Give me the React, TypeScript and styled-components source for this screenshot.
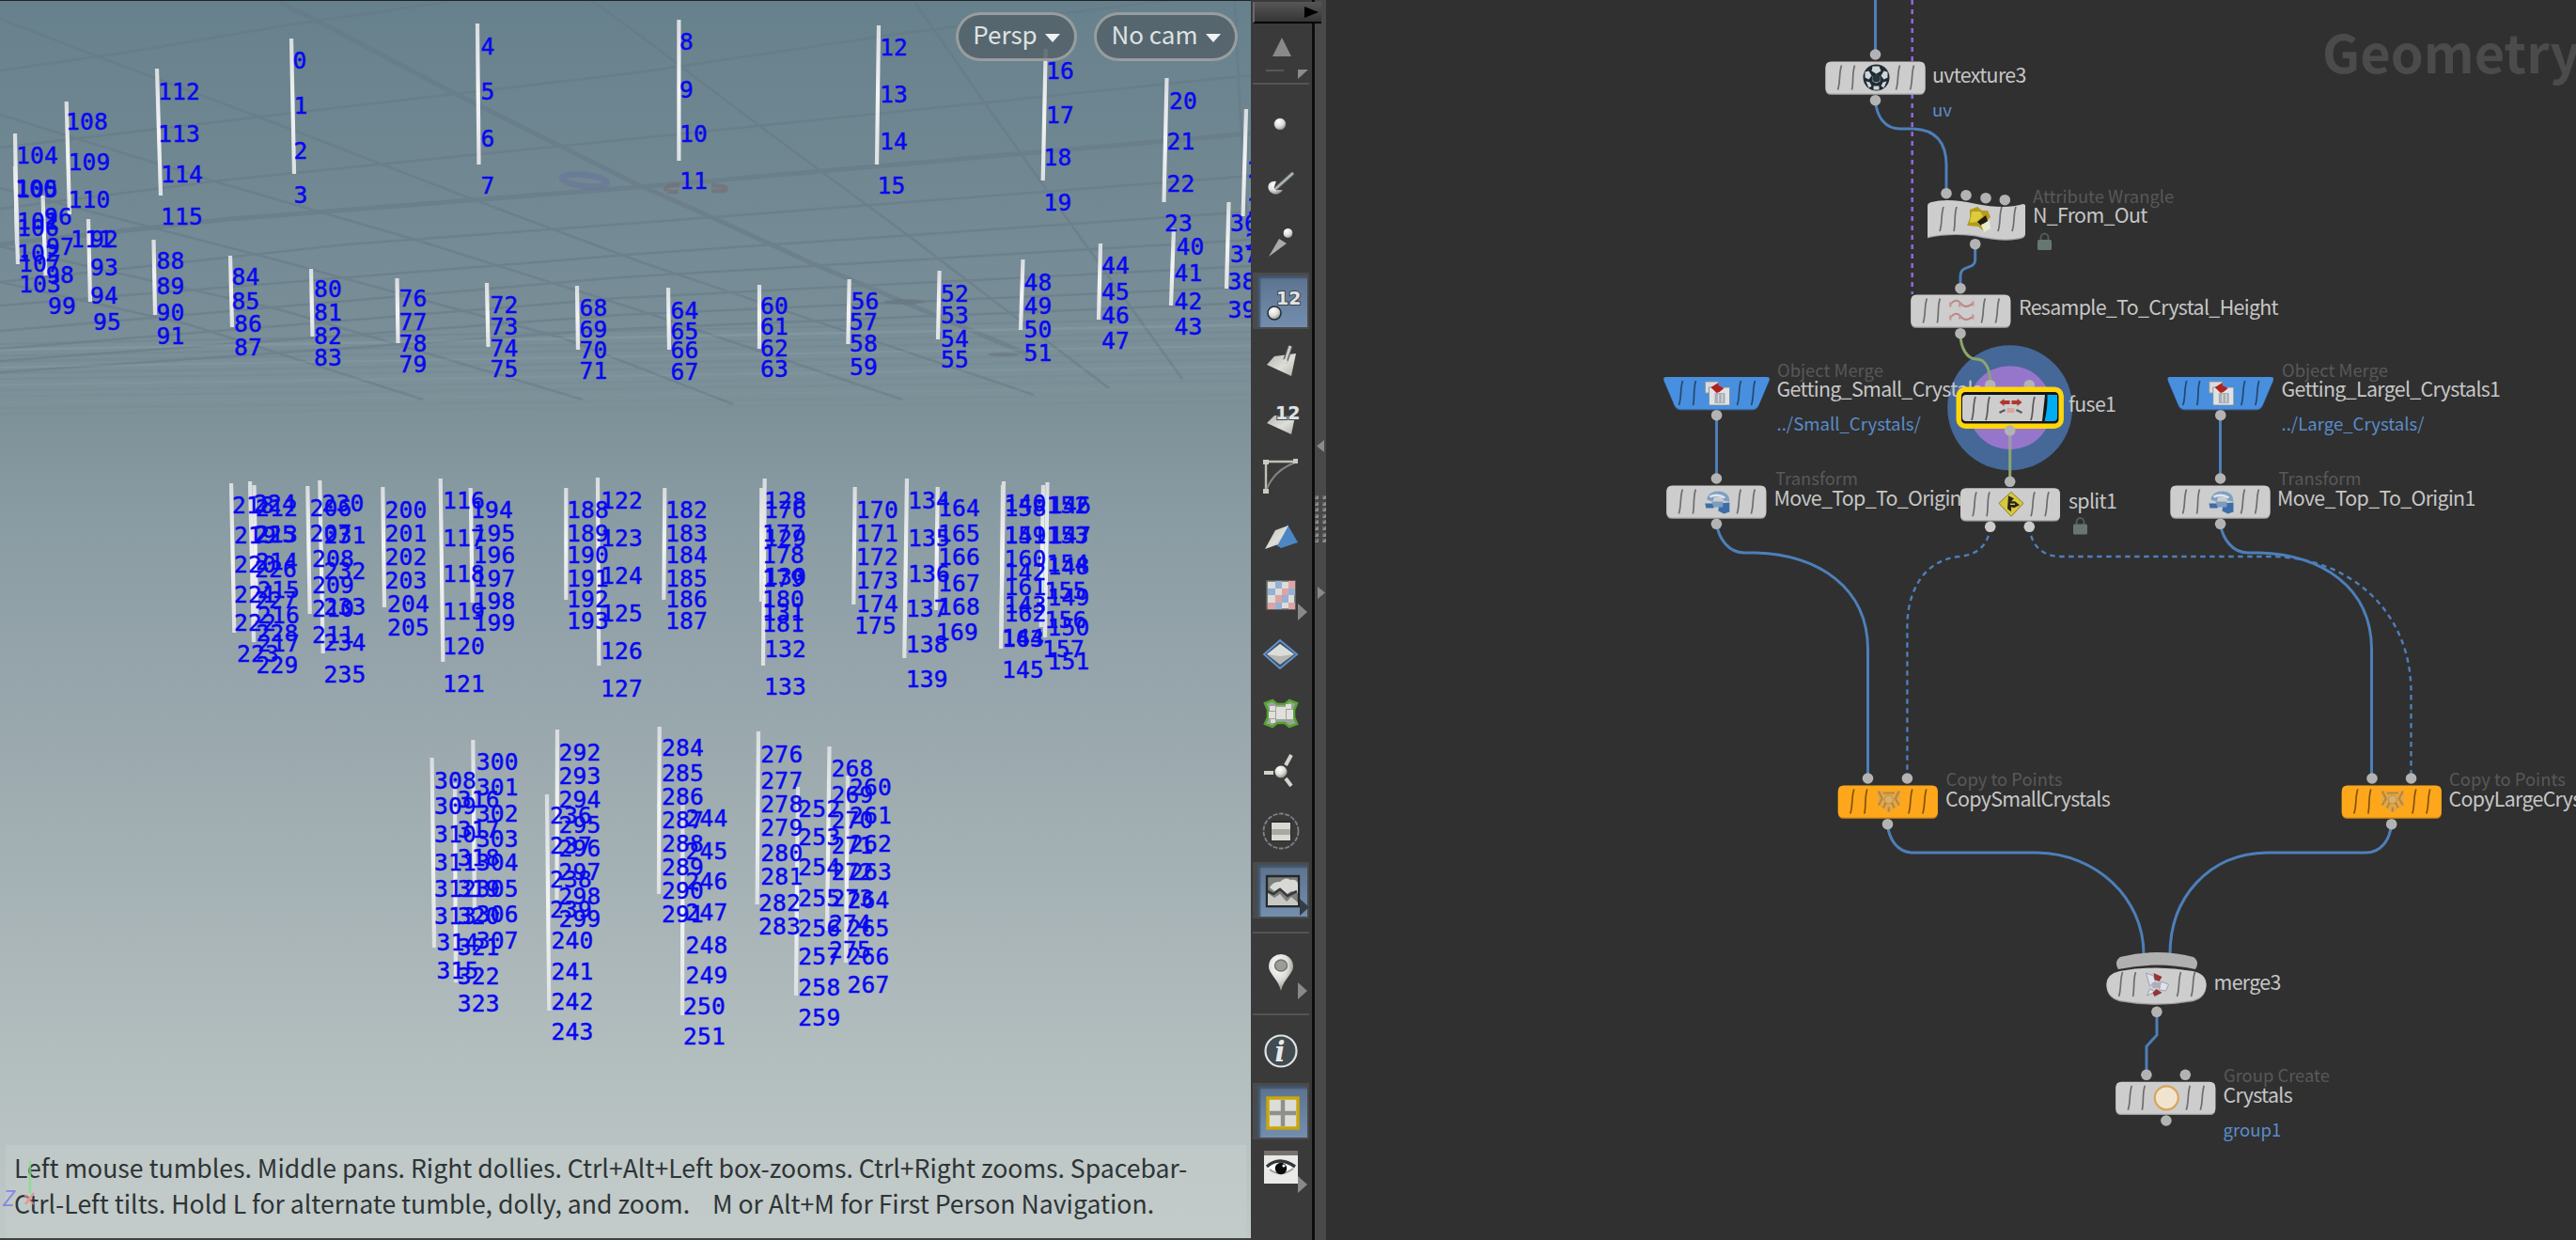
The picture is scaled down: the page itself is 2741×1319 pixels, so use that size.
import React from "react";
import styled, { createGlobalStyle } from "styled-components";

const GlobalStyle = createGlobalStyle`
  * { box-sizing: border-box; }
  html, body { margin: 0; padding: 0; background: #303030; overflow: hidden; }
`;

const uiFont = `"Noto Sans CJK SC", "Noto Sans CJK JP", "Noto Sans", sans-serif`;

/* ---------- layout ---------- */

const Screen = styled.div`
  display: flex;
  width: 2741px;
  height: 1319px;
  overflow: hidden;
  font-family: ${uiFont};
`;

const Viewport = styled.section`
  position: relative;
  display: flex;
  flex-direction: column;
  justify-content: space-between;
  flex: 0 0 1331px;
  overflow: hidden;
  border-top: 1px solid #1f2427;
  border-bottom: 2px solid #40403f;
  background: linear-gradient(
    180deg,
    #67818c 0%,
    #758b95 20%,
    #7d9199 33%,
    #8a9ca3 42%,
    #97a6ac 56%,
    #a4b1b4 70%,
    #b2bdbe 85%,
    #bfc8c8 100%
  );
`;

const SceneLayer = styled.svg`
  position: absolute;
  left: 0;
  top: -1px;
  width: 1331px;
  height: 1319px;
`;

const PointLabel = styled.span.attrs<{ $x: number; $y: number }>((p) => ({
  style: { left: p.$x, top: p.$y - 12.5 },
}))<{ $x: number; $y: number }>`
  position: absolute;
  font: 24.5px/24px "DejaVu Sans Mono", monospace;
  letter-spacing: 0.3px;
  color: #0808f0;
  -webkit-text-stroke: 0.5px #0808f0;
  white-space: nowrap;
`;

const CameraBar = styled.div`
  position: relative;
  display: flex;
  justify-content: flex-end;
  gap: 18px;
  padding: 12px 14px 0 0;
`;

const CameraButton = styled.button<{ $w: number }>`
  display: flex;
  align-items: center;
  justify-content: center;
  gap: 8px;
  width: ${(p) => p.$w}px;
  height: 52px;
  padding: 0 0 6px;
  border: 3px solid rgba(160, 163, 163, 0.9);
  border-radius: 26px;
  background: rgba(84, 98, 106, 0.85);
  color: #dfe2e3;
  font: 26px/44px ${uiFont};
  white-space: nowrap;
`;

const Caret = styled.i`
  width: 0;
  height: 0;
  margin-top: 8px;
  border: 8px solid transparent;
  border-top: 9px solid #f0f2f2;
  border-bottom: 0;
`;

const HelpPanel = styled.div`
  position: relative;
  height: 99px;
  margin: 0 5px 0 6px;
  padding: 5px 0 0 9px;
  background: rgba(196, 205, 203, 0.55);
  color: #2e3437;
  font: 26.6px/38px ${uiFont};
  white-space: pre;
`;

const HelpLine = styled.div``;

const Toolbar = styled.nav`
  display: flex;
  flex-direction: column;
  align-items: center;
  flex: 0 0 65px;
  min-width: 0;
  width: 65px;
  padding: 2px 3px 0 2px;
  background: #3a3a3a;
`;

const ToolbarHandle = styled.div`
  display: flex;
  justify-content: flex-end;
  align-items: center;
  align-self: flex-start;
  width: 73px;
  height: 23px;
  flex: none;
  padding-right: 2px;
  border-left: 2px solid #6a6a6a;
  border-bottom: 2px solid #050505;
  background: linear-gradient(180deg, #565656, #353535);
  z-index: 1;
`;

const ToolCell = styled.div<{ $h: number }>`
  display: flex;
  align-items: center;
  justify-content: center;
  flex: 0 0 ${(p) => p.$h}px;
  width: 60px;
`;

const ToolFace = styled.div<{ $active?: boolean }>`
  display: flex;
  align-items: center;
  justify-content: center;
  width: 60px;
  height: 60px;
  ${(p) =>
    p.$active &&
    `border: solid #4a4a4b; border-width: 3px 2px 2px 5px; background: linear-gradient(180deg, #5c738f, #738eae);
     box-shadow: inset 3px 3px 2px #40546b;`}
  svg { flex: none; overflow: visible; }
`;

const ToolRule = styled.hr`
  width: 60px;
  height: 2px;
  flex: none;
  margin: 0;
  border: 0;
  background: #545454;
`;

const Splitter = styled.div`
  display: flex;
  flex-direction: column;
  align-items: center;
  flex: 0 0 15px;
  padding-top: 468px;
  border-left: 3px solid #0c0c0c;
  background: #494949;
  svg { flex: none; }
`;

const Grip = styled.div`
  display: grid;
  grid-template-columns: 4px 4px;
  grid-auto-rows: 4px;
  gap: 2.6px 4px;
  margin: 46px 0 47px;
`;

const GripDot = styled.i`
  background: linear-gradient(135deg, #666 50%, #8e8e8e 50%);
  border-radius: 1px;
`;

/* ---------- network editor ---------- */

const Network = styled.main`
  position: relative;
  flex: 1 1 auto;
  overflow: hidden;
  background: #303030;
`;

const Canvas = styled.div`
  position: absolute;
  left: -1411px;
  top: 0;
  width: 2741px;
  height: 1319px;
`;

const WireLayer = styled.svg`
  position: absolute;
  inset: 0;
  width: 2741px;
  height: 1319px;
`;

const ContextTitle = styled.div`
  position: absolute;
  left: 2471px;
  top: 12px;
  color: #4b4b4b;
  font: 700 56px/84px ${uiFont};
`;

type Tone = "name" | "type" | "info";
const tones = {
  name: { size: 21.4, color: "#c6c6c6", spacing: -0.68 },
  type: { size: 18.4, color: "#585858", spacing: 0 },
  info: { size: 18.6, color: "#5a8cc8", spacing: 0 },
};

const NodeText = styled.span<{ $x: number; $y: number; $tone: Tone }>`
  position: absolute;
  left: ${(p) => p.$x}px;
  top: ${(p) => p.$y - 17}px;
  color: ${(p) => tones[p.$tone].color};
  font: ${(p) => tones[p.$tone].size}px/30px ${uiFont};
  letter-spacing: ${(p) => tones[p.$tone].spacing}px;
  white-space: nowrap;
`;

/* ---------- point data ---------- */

interface Strand {
  first: number;
  line: [number, number, number, number];
  xs: number[];
  ys: number[];
}

const s = (first: number, line: [number, number, number, number], xs: number[], ys: number[]): Strand => ({ first, line, xs, ys });

const strands: Strand[] = [
  s(0, [310, 41, 313, 185], [311.5, 312.5], [64, 112, 160, 207]),
  s(4, [508, 25, 509.5, 175], [511.5], [49, 97, 147, 197]),
  s(8, [722.4, 21, 722.4, 171], [723], [44, 95, 142, 192]),
  s(12, [935, 27, 933, 175], [936, 936, 936, 933.5], [50, 100, 150, 197]),
  s(16, [1112.7, 52, 1109.7, 192], [1113, 1113, 1110.5], [75, 122, 167, 215]),
  s(20, [1241.5, 83, 1238.5, 215], [1244, 1241.5, 1241.5, 1239], [107, 150, 195, 237]),
  s(24, [1326, 116, 1322.6, 230], [1331, 1327.5, 1327.5, 1325], [141, 180, 219, 257]),
  s(36, [1307.5, 215, 1305, 307], [1309, 1309, 1306.5], [237, 270, 299, 329]),
  s(40, [1249, 243, 1246, 325], [1251.5, 1249.5], [262, 290, 320, 347]),
  s(44, [1171, 259, 1169, 340], [1172], [282, 310, 335, 362]),
  s(48, [1088.5, 276, 1086, 351], [1089.5], [300, 325, 350, 375]),
  s(52, [999.6, 288, 998, 361], [1001], [312, 335, 360, 382]),
  s(56, [903.7, 297, 902.4, 366], [905.5, 904], [320, 342, 365, 390]),
  s(60, [808, 303, 808, 371], [809], [325, 347, 370, 392]),
  s(64, [711, 306, 712, 372], [713.5], [330, 352, 372, 395]),
  s(68, [614, 304, 615, 372], [616.5], [327, 350, 372, 394]),
  s(72, [518, 301, 519.5, 369], [521.5], [324, 347, 370, 392]),
  s(76, [422.5, 296, 423.5, 365], [424.5], [317, 342, 365, 387]),
  s(80, [331, 286, 332.5, 358], [334], [307, 332, 357, 380]),
  s(84, [245, 272, 247, 348], [246.5, 246.5, 249], [294, 320, 344, 369]),
  s(88, [163.5, 255, 165, 335], [166.5], [277, 304, 332, 357]),
  s(92, [94, 233, 96, 321], [96, 96, 96, 99], [254, 284, 314, 342]),
  s(96, [45.5, 208, 48.5, 293], [47, 49, 49, 51], [230, 262, 292, 325]),
  s(100, [16, 177, 19, 281], [16, 18, 18, 20], [200, 235, 269, 302]),
  s(104, [16, 142, 18, 260], [17, 17, 18, 20], [165, 201, 242, 280]),
  s(108, [70.7, 108, 74, 228], [70, 72.5, 72.5, 75], [129, 172, 212, 254]),
  s(112, [167, 73, 171, 208], [168, 168, 171], [97, 142, 185, 230]),
  s(116, [468.7, 509, 471.3, 704], [471], [532, 572, 610, 650, 687, 727]),
  s(122, [636, 508, 637.3, 708], [639], [532, 572, 612, 652, 692, 732]),
  s(128, [813.7, 509, 812, 708], [813, 813, 813, 811, 813], [532, 572, 613, 651, 690, 730]),
  s(134, [965, 509, 962.3, 700], [966, 966, 966, 963.7], [532, 572, 610, 647, 685, 722]),
  s(140, [1068, 512, 1065, 690], [1068.5, 1068.5, 1068.5, 1068.5, 1066], [535, 569, 608, 643, 678, 712]),
  s(146, [1114.5, 513, 1112, 678], [1116, 1116, 1114.5], [537, 569, 602, 635, 667, 703]),
  s(152, [1110, 516, 1107.7, 667], [1113.5, 1113.5, 1113.5, 1111.5, 1111.5, 1109], [537, 569, 599, 628, 659, 690]),
  s(158, [1067, 516, 1065.5, 670], [1068.5, 1068.5, 1068.5, 1068.5, 1068.5, 1066], [540, 569, 594, 624, 652, 679]),
  s(164, [997.7, 518, 996, 649], [998, 998, 998, 998, 998, 996], [540, 567, 592, 620, 645, 672]),
  s(170, [909.7, 518, 908.3, 643], [910.8, 910.8, 910.8, 910.8, 910.8, 909], [542, 567, 592, 617, 642, 665]),
  s(176, [810.3, 519, 810, 640], [813, 811], [542, 567, 590, 615, 637, 663]),
  s(182, [707.3, 519, 706.3, 638], [708], [542, 567, 590, 615, 637, 660]),
  s(188, [602.3, 519, 602.3, 638], [603], [542, 567, 590, 615, 637, 660]),
  s(194, [500.7, 519, 502.7, 641], [501, 503.5], [542, 567, 590, 615, 639, 662]),
  s(200, [407.3, 518, 409, 646], [409.5, 409.5, 409.5, 409.5, 412], [542, 567, 592, 617, 642, 667]),
  s(206, [327.3, 517, 329.7, 653], [329.5, 329.5, 332], [540, 567, 594, 622, 647, 675]),
  s(212, [270.5, 516, 273, 660], [272, 272, 272, 274], [540, 568, 597, 627, 654, 684]),
  s(218, [246, 514, 249.3, 673], [247, 249, 249, 249, 249, 252], [537, 569, 600, 632, 662, 695]),
  s(224, [266, 512, 270, 683], [270, 270, 271, 271, 272.5], [535, 568, 605, 638, 673, 707]),
  s(230, [340.3, 511, 343.7, 695], [342.5, 344.5], [535, 569, 607, 645, 683, 717]),
  s(236, [582, 845, 584.3, 1075], [585, 585, 585, 585, 586.5], [867, 899, 935, 967, 1000, 1033, 1065, 1097]),
  s(244, [726.5, 853, 726, 1080], [729.5, 729.5, 729.5, 729.5, 729.5, 729.5, 727], [870, 905, 937, 970, 1005, 1037, 1070, 1102]),
  s(252, [849, 837, 847, 1059], [849.3], [860, 890, 922, 955, 987, 1017, 1050, 1082]),
  s(260, [902, 825, 900, 1024], [904, 904, 904, 904, 901.5], [837, 867, 897, 927, 957, 987, 1017, 1047]),
  s(268, [882.5, 794, 880, 990], [884.5, 884.5, 884.5, 884.5, 884.5, 884.5, 882], [817, 845, 872, 899, 927, 955, 982, 1010]),
  s(276, [807, 778, 805.7, 962], [809.3, 809.3, 809.3, 809.3, 809.3, 809.3, 807], [802, 830, 855, 880, 907, 932, 960, 985]),
  s(284, [701.7, 773, 701, 951], [704], [795, 822, 847, 872, 897, 922, 947, 972]),
  s(292, [593, 776, 592.5, 957], [594.5], [800, 825, 850, 877, 902, 927, 953, 977]),
  s(300, [503.3, 787, 505, 967], [506.7], [810, 837, 865, 892, 917, 945, 972, 1000]),
  s(308, [459.6, 806, 462, 1008], [462, 462, 462, 462, 462, 462, 464.5], [830, 857, 887, 917, 945, 974, 1002, 1032]),
  s(316, [484, 833, 485, 1045], [486.7], [850, 882, 912, 945, 974, 1007, 1038, 1067]),
];

/* ---------- viewport scene ---------- */

const gridThin = [
  "M0 75 139 55 304 27 477 2",
  "M0 157 338 117 680 77 963 35 1245 0",
  "M0 222 243 191 680 147 1331 80",
  "M0 300 369 260 680 237 1331 187",
  "M0 325 680 270 1331 225",
  "M0 352 660 295 1331 255",
  "M0 371 660 317 1331 283",
  "M0 384 660 335 1331 305",
  "M0 396 660 350 1331 322",
  "M0 20 104 60 277 125 503 212 680 278 1100 420",
  "M0 122 225 192 442 255 680 330 960 425",
  "M0 200 300 278 600 360 780 430",
  "M0 262 300 330 620 425",
  "M0 300 200 345 450 425",
  "M629 0 680 37 807 133 963 248 1180 413",
  "M974 3 1046 107 1150 253 1258 403",
  "M1314 0 1319 110 1328 250",
];
const gridThick = ["M0 260 243 233 680 199 1331 142", "M299 3 347 27 481 98 680 197 755 230 864 280 1094 377"];

const farRows = Array.from({ length: 13 }, (_, i) => i);

function Scene() {
  return (
    <SceneLayer viewBox="0 0 1331 1319">
      <defs>
        <linearGradient id="strand" x1="0" x2="0" y1="0" y2="1">
          <stop offset="0" stopColor="#d8dcde" />
          <stop offset="0.5" stopColor="#f2f4f4" />
          <stop offset="1" stopColor="#dde0e2" />
        </linearGradient>
      </defs>
      <g fill="none" stroke="#667886" opacity="0.5">
        {gridThin.map((d) => <path key={d} d={d} strokeWidth="2.5" />)}
        {gridThick.map((d) => <path key={d} d={d} strokeWidth="5" />)}
      </g>
      <g fill="none">
        {farRows.map((i) => (
          <path
            key={i}
            d={`M0 ${366 + i * 6.2}Q660 ${354 + i * 6.6} 1331 ${338 + i * 7.4}`}
            stroke={i % 3 === 1 ? "#93a5ac" : "#6d808c"}
            strokeWidth={i % 2 ? 2.6 : 2}
            opacity={0.36 - i * 0.022}
          />
        ))}
      </g>
      <ellipse cx="622" cy="192" rx="24" ry="6" fill="none" stroke="#65719a" strokeWidth="6.5" opacity="0.5" transform="rotate(6 622 192)" />
      <path d="M709 203q-4-6 14-6M710 204h12M757 197q22 1 13 7M757 203h14" fill="none" stroke="#76686f" strokeWidth="4.5" opacity="0.55" />
      <ellipse cx="962" cy="321" rx="22" ry="3" fill="#68747d" opacity="0.6" />
      <ellipse cx="1068" cy="377" rx="17" ry="2" fill="#68747d" opacity="0.6" />
      {strands.map(({ first, line: [x1, y1, x2, y2] }) => (
        <path
          key={first}
          d={`M${x1 - 2.1} ${y1}H${x1 + 2.1}L${x2 + 2.1} ${y2}H${x2 - 2.1}Z`}
          fill="url(#strand)"
        />
      ))}
    </SceneLayer>
  );
}

function PointNumbers() {
  return (
    <>
      {strands.flatMap(({ first, xs, ys }) =>
        ys.map((y, i) => (
          <PointLabel key={first + i} $x={xs[Math.min(i, xs.length - 1)]} $y={y}>
            {first + i}
          </PointLabel>
        ))
      )}
    </>
  );
}

const AxisGnomon = styled.svg`
  position: absolute;
  left: 0;
  bottom: 20px;
  width: 50px;
  height: 70px;
  opacity: 0.75;
`;

const AxisLetter = styled.span`
  position: absolute;
  left: 3px;
  bottom: 31px;
  color: #8488e4;
  font: italic 24px/24px "Open Sans", sans-serif;
`;

/* ---------- toolbar icons (origin at the cell centre) ---------- */

const Icon = ({ children }: { children: React.ReactNode }) => (
  <svg width="60" height="60" viewBox="-30 -30 60 60">
    <defs>
      <radialGradient id="ball" cx="0.38" cy="0.3" r="0.75">
        <stop offset="0" stopColor="#fff" />
        <stop offset="0.55" stopColor="#ddddd8" />
        <stop offset="1" stopColor="#85857f" />
      </radialGradient>
      <linearGradient id="plate" x1="0" y1="0" x2="1" y2="1">
        <stop offset="0" stopColor="#b4b5b1" />
        <stop offset="0.55" stopColor="#deded9" />
        <stop offset="1" stopColor="#b2b3af" />
      </linearGradient>
    </defs>
    {children}
  </svg>
);

const More = ({ dark }: { dark?: boolean }) => <path d="M18 9 28 18 18 27Z" fill={dark ? "#353c44" : "#898989"} />;

const Digits = ({ x, y }: { x: number; y: number }) => (
  <text x={x} y={y} fontFamily="DejaVu Sans" fontWeight="700" fontSize="19" fill="#e3e3e0" stroke="#3c4650" strokeWidth="2" paintOrder="stroke">
    12
  </text>
);

const tools: { key: string; active?: boolean; art: React.ReactNode }[] = [
  { key: "point", art: <ellipse cx="-1" cy="0" rx="6.5" ry="6.5" fill="url(#ball)" stroke="#2c2f31" strokeWidth="0.6" /> },
  {
    key: "normal",
    art: (
      <>
        <path d="M-13 1A7.5 7 0 1 0 2 7L-3 7-7 3-5-2A8 8 0 0 0-13 1Z" fill="url(#ball)" />
        <path d="M-6 6 13-11" stroke="#4c5355" strokeWidth="5" />
        <path d="M-6 6 13-11" stroke="#adb3b4" strokeWidth="2.6" />
      </>
    ),
  },
  {
    key: "trail",
    art: (
      <>
        <path d="M-13 15-2-4 6 1Z" fill="#aaaba7" />
        <circle cx="7.5" cy="-10" r="5.5" fill="url(#ball)" stroke="#2c3032" />
      </>
    ),
  },
  {
    key: "pointnum",
    active: true,
    art: (
      <>
        <Digits x={-7} y={3} />
        <circle cx="-9" cy="12" r="7" fill="url(#ball)" stroke="#23303c" strokeWidth="1.6" />
      </>
    ),
  },
  {
    key: "primnormal",
    art: (
      <>
        <path d="M-15 5-7-4 16-7 11 17Z" fill="url(#plate)" />
        <path d="M4 3 10-15" stroke="#4e5354" strokeWidth="5.5" />
        <path d="M4 3 10-15" stroke="#c7cac8" strokeWidth="3" />
        <circle cx="4" cy="2" r="3" fill="#d8d8d4" />
      </>
    ),
  },
  {
    key: "primnum",
    art: (
      <>
        <path d="M-15 4-7-4 15-3 11 16Z" fill="url(#plate)" />
        <Digits x={-6} y={0} />
      </>
    ),
  },
  {
    key: "hull",
    art: (
      <>
        <path d="M-16 16V-17H17" fill="none" stroke="#bfc1b8" strokeWidth="2.4" />
        <path d="M-15 12Q-7-8 15-16" fill="none" stroke="#848781" strokeWidth="2" />
        <path d="M-19-19h6v5h-6zM13-20h5v5h-5zM-19 12h6v5h-6z" fill="#c9cac4" />
      </>
    ),
  },
  {
    key: "backface",
    art: (
      <>
        <path d="M7-13 18 6 0 12-6 8Z" fill="#4d86c4" />
        <path d="M-17 13-6-7 8-12-3 8Z" fill="url(#plate)" />
      </>
    ),
  },
  {
    key: "uv",
    art: (
      <>
        <path d="M-15-15H15V15H-15Z" fill="#dcdcd8" stroke="#66696a" strokeWidth="1.6" />
        <path d="M-6-15H1V-7H-6ZM-14-7H-6V0H-14ZM1 0H8V8H1ZM8-7H15V0H8ZM-6 8H1V15H-6Z" fill="#93b1d5" />
        <path d="M8-15H15V-7H8ZM1-7H8V0H1ZM-6 0H1V8H-6ZM-14 8H-6V15H-14ZM8 8H15V15H8Z" fill="#dfa3a5" />
        <More />
      </>
    ),
  },
  {
    key: "breakpoint",
    art: (
      <>
        <path d="M-18 0-1-15 17 0-1 15Z" fill="#39506b" stroke="#6292c9" strokeWidth="2" />
        <path d="M-15 0-1-11 14 0-1 11Z" fill="#b4b6b2" />
        <path d="M-15 0-1-11V2ZM14 0-1 2V-11Z" fill="#dcddd8" />
      </>
    ),
  },
  {
    key: "lattice",
    art: (
      <>
        <path d="M-17-11-9-14-4-10H4L9-14 17-11 14-4V4L17 11 9 14 4 10H-4L-9 14-17 11-14 4V-4Z" fill="#9fa19d" stroke="#55a431" strokeWidth="2.6" />
        <path d="M-12-8H-6V-3H-12ZM6-4H13V6H6ZM-13-2H-6V5H-13ZM5-10H11V-5H5ZM-5-7H5V6H-5ZM-11 6H-6V10H-11Z" fill="#dfe0db" />
      </>
    ),
  },
  {
    key: "axes",
    art: (
      <>
        <path d="M-18 1H-8M5-7 11-18M5 7 11 15" stroke="#d1d3cd" strokeWidth="4" />
        <circle cx="0" cy="0" r="6.5" fill="url(#ball)" />
      </>
    ),
  },
  {
    key: "list",
    art: (
      <>
        <circle cx="0" cy="0" r="18.5" fill="none" stroke="#7f8283" strokeWidth="1.8" strokeDasharray="5 1.5" />
        <path d="M-11-11H11V11H-11Z" fill="#2a2d2e" />
        <path d="M-10-9H10V10H-10Z" fill="#d9d9d4" />
        <path d="M-10-2H10V4H-10Z" fill="#a7a9a5" />
      </>
    ),
  },
  {
    key: "background",
    active: true,
    art: (
      <>
        <path d="M-17-15H17V17H-17Z" fill="#7c7f7b" stroke="#25282a" strokeWidth="2.4" />
        <path d="M-14-3Q-10-10-3-9 3-15 8-11 15-12 16-7V3L9 1 3 5-4-2-9 1Z" fill="#d8d9d4" />
        <path d="M-16 16V3L-9 8-3 4 4 12 9 7 16 13V16Z" fill="#c7c8c3" />
        <path d="M-16 1-10 4-3-1 5 6 15 1" fill="none" stroke="#373a3b" strokeWidth="2.6" />
        <More dark />
      </>
    ),
  },
];

function ToolButton({ h, active, children }: { h: number; active?: boolean; children: React.ReactNode }) {
  return (
    <ToolCell $h={h}>
      <ToolFace $active={active}>
        <Icon>{children}</Icon>
      </ToolFace>
    </ToolCell>
  );
}

function DisplayToolbar() {
  return (
    <Toolbar>
      <ToolbarHandle>
        <svg width="16" height="14" viewBox="0 0 16 14"><path d="M0 1 15 7 0 13Z" fill="#000" /></svg>
      </ToolbarHandle>
      <ToolButton h={63}>
        <path d="M-9 3 1-17 11 3Z" fill="#898989" />
        <path d="M-16 18H3" stroke="#585858" strokeWidth="2" />
        <path d="M18 17H29L18 27Z" fill="#8c8c8c" />
      </ToolButton>
      <ToolRule />
      <ToolCell $h={11} />
      {tools.map((t) => (
        <ToolButton key={t.key} h={62.65} active={t.active}>{t.art}</ToolButton>
      ))}
      <ToolCell $h={13} />
      <ToolRule />
      <ToolButton h={85}>
        <path d="M0 21C-3 8-13 3-13-5A13 13 0 0 1 13-5C13 3 3 8 0 21Z" fill="url(#ball)" transform="translate(0 -2)" />
        <ellipse cx="0" cy="-8" rx="6.5" ry="6" fill="#9b9b98" stroke="#737571" strokeWidth="1.5" />
        <path d="M18 10 28 19 18 28Z" fill="#898989" />
      </ToolButton>
      <ToolRule />
      <ToolButton h={72}>
        <circle cx="0" cy="2" r="16.5" fill="#414b50" stroke="#dfe3e3" strokeWidth="2.2" />
        <text x="-6.5" y="13" fontFamily="DejaVu Serif" fontStyle="italic" fontWeight="700" fontSize="29" fill="#e8eaea">i</text>
      </ToolButton>
      <ToolButton h={60} active>
        <path d="M-16-14H16V18H-16Z" fill="#dcddd9" stroke="#c9a708" strokeWidth="3.4" />
        <path d="M0-12V16M-14 2H14" stroke="#8f908b" strokeWidth="4.4" />
      </ToolButton>
      <ToolButton h={60}>
        <path d="M-18-18H18V17H-18Z" fill="#e9e9e7" />
        <path d="M-18-18H18V-13H-18Z" fill="#74716e" />
        <path d="M-15 0Q-2-14 14 0-1 13-15 0Z" fill="#fff" />
        <path d="M-15-1Q-2-13 15-1" fill="none" stroke="#33373a" strokeWidth="3.4" />
        <path d="M-12 2Q0 11 13 1" fill="none" stroke="#9d9e9c" strokeWidth="2" />
        <circle cx="0" cy="1" r="6.2" fill="#0b0b0c" />
        <circle cx="3" cy="-2" r="1.6" fill="#fff" />
        <More />
      </ToolButton>
    </Toolbar>
  );
}

/* ---------- nodes ---------- */

const wireBlue = "#4d7fb9";

type Shape = "box" | "input" | "wave" | "merge";

const shapes: Record<Shape, string> = {
  box: "M6 0H100Q106 0 106 6V28Q106 34 100 34H6Q0 34 0 28V6Q0 0 6 0Z",
  input: "M-1 0H107Q110 0 109 3L98 29Q96 34 91 34H15Q10 34 8 29L-3 3Q-4 0-1 0Z",
  wave: "M4-1Q22-6 52 1 82 7 102 1L104 2V32Q104 36 98 37 80 41 50 34 22 31 0 36V3Q0 0 4-1Z",
  merge: "M14 3Q53-4 92 3 106 6 106 17 106 30 92 34 53 41 14 34 0 30 0 17 0 6 14 3Z",
};

function NodeBody({ x, y, shape = "box", fill = "#cdcdcd", children }: { x: number; y: number; shape?: Shape; fill?: string; children?: React.ReactNode }) {
  const plain = fill === "#cdcdcd";
  return (
    <g transform={`translate(${x} ${y})`}>
      <path d={shapes[shape]} fill={fill} transform="translate(0 1.2)" />
      <path d={shapes[shape]} fill="#000" opacity="0.22" transform="translate(0 1.2)" />
      <path d={shapes[shape]} fill={fill} />
      <path
        d="M17 4C14 13 16 21 13 30M31 4C28 13 30 21 28 30M79 4C76 13 78 21 75 30M94 4C91 13 93 21 90 30"
        fill="none" stroke={plain ? "#5c5c5c" : "#000"} strokeOpacity={plain ? 0.85 : 0.5} strokeWidth="1.7"
      />
      <g transform="translate(54 17)">{children}</g>
    </g>
  );
}

const Port = ({ x, y, light }: { x: number; y: number; light?: boolean }) => <circle cx={x} cy={y} r="5.8" fill={light ? "#cdcdcd" : "#b3b3b3"} />;

const Lock = ({ x, y }: { x: number; y: number }) => (
  <g transform={`translate(${x} ${y})`}>
    <path d="M3.5 8V5.5A4 4.5 0 0 1 11.5 5.5V8" fill="none" stroke="#4f5d59" strokeWidth="2" />
    <rect x="0" y="7.5" width="15" height="11" rx="1.5" fill="#667772" />
  </g>
);

const MergeGlyph = () => (
  <>
    <path d="M-13-12H1V0H-13Z" fill="#d9dcdc" stroke="#8f9294" strokeWidth="0.8" />
    <path d="M-9-6H13V13H-9Z" fill="#dfe3e5" stroke="#80878e" strokeWidth="0.8" />
    <path d="M-3 0H8V11H-3Z" fill="#a9adb4" />
    <path d="M1 1V10M5 1V10" stroke="#d7dade" strokeWidth="1.4" />
    <path d="M-7-6 1-11V-8L7-5 2-1-1 0Z" fill="#b0231d" />
  </>
);

const TransformGlyph = () => (
  <>
    <path d="M-11-2Q-10-11 2-11 13-10 13 0L7-1 4-5H-3L-5 0Z" fill="#7f9fc2" />
    <path d="M-13 2H-2L-4 7H-12ZM2 2 13 1V11L7 13 1 10Z" fill="#3d6da8" />
    <path d="M-8-5Q0-9 8-4" stroke="#dde6ee" strokeWidth="2.5" fill="none" />
    <path d="M-6 0H6V6H-4Z" fill="#7d9cc0" />
  </>
);

const CopyGlyph = () => (
  <>
    <path d="M-12-12-4-10 5-10 12-12V4L6 7 2 12-2 12-6 7-12 4Z" fill="#e0a64a" opacity="0.85" />
    <path d="M-11-11-7-3-11 4M11-11 7-3 11 4M-6 7-3 1M6 7 3 1M-6-9 6-9M0 6V11" stroke="#94733f" strokeWidth="2.2" fill="none" opacity="0.6" />
    <circle cx="0" cy="-2" r="4.5" fill="#d8b06c" stroke="#94733f" strokeOpacity="0.5" />
  </>
);

const NodeGraph = () => (
  <>
    <WireLayer viewBox="0 0 2741 1319">
      <circle cx="2138.7" cy="433.7" r="66.5" fill="#456899" />
      <circle cx="2138.7" cy="433.7" r="44.5" fill="#9676ca" />
    </WireLayer>
    <WireLayer viewBox="0 0 2741 1319">
      <g fill="none" stroke={wireBlue} strokeWidth="3">
        <path d="M1995.5 0V58M1995.5 107C1997 125 2006 137 2022 137H2036C2060 138 2071 152 2071 176V206" />
        <path d="M2101.7 260V277C2101 287 2087 281 2086 293V307" />
        <path d="M1826.5 442V509M2362.5 442V509" />
        <path d="M1826.5 557C1829 574 1840 588 1856 588H1868C1935 590 1987 625 1987.5 690V828" />
        <path d="M2362.5 557C2365 574 2376 588 2392 588H2404C2471 590 2523 625 2523.5 690V828" />
        <path d="M2008.5 877C2010 893 2019 907 2036 907H2168C2230 908 2281 955 2281 1015" />
        <path d="M2544.5 877C2543 893 2534 907 2517 907H2412C2350 908 2309 955 2309 1015" />
        <path d="M2295 1076V1101L2284 1113V1143" />
        <path d="M2117.7 560C2116 580 2104 590 2085 592 2050 595 2030 625 2029.4 665V828M2159.3 560C2161 578 2170 590 2190 592H2415C2500 592 2565 650 2565.5 735V828" strokeWidth="2.4" strokeDasharray="5.5 4.5" />
      </g>
      <path d="M2034.7 0V313" stroke="#8a68d6" strokeWidth="2.6" strokeDasharray="5 5" />
      <path d="M2086 355C2086 370 2093 382 2103 382 2113 382 2118 393 2118 410M2138.7 458V512" fill="none" stroke="#8aa66c" strokeWidth="3" />
      <path d="M2138.7 463V478" stroke="#9d9aa9" strokeWidth="3.4" />
    </WireLayer>

    <NodeText $x={2056} $y={81} $tone="name">uvtexture3</NodeText>
    <NodeText $x={2056} $y={117.5} $tone="info">uv</NodeText>
    <NodeText $x={2163} $y={209.5} $tone="type">Attribute Wrangle</NodeText>
    <NodeText $x={2163} $y={230} $tone="name">N_From_Out</NodeText>
    <NodeText $x={2148} $y={328} $tone="name">Resample_To_Crystal_Height</NodeText>
    <NodeText $x={1891} $y={394.5} $tone="type">Object Merge</NodeText>
    <NodeText $x={1890.5} $y={415} $tone="name">Getting_Small_Crystals</NodeText>
    <NodeText $x={1890.5} $y={452} $tone="info">../Small_Crystals/</NodeText>
    <NodeText $x={1889} $y={510} $tone="type">Transform</NodeText>
    <NodeText $x={1887.5} $y={530.5} $tone="name">Move_Top_To_Origin</NodeText>
    <NodeText $x={2201} $y={430.5} $tone="name">fuse1</NodeText>
    <NodeText $x={2201} $y={533.5} $tone="name">split1</NodeText>
    <NodeText $x={2428} $y={394.5} $tone="type">Object Merge</NodeText>
    <NodeText $x={2427.5} $y={415} $tone="name">Getting_Largel_Crystals1</NodeText>
    <NodeText $x={2427.5} $y={452} $tone="info">../Large_Crystals/</NodeText>
    <NodeText $x={2424.5} $y={510} $tone="type">Transform</NodeText>
    <NodeText $x={2423} $y={530.5} $tone="name">Move_Top_To_Origin1</NodeText>
    <NodeText $x={2070.5} $y={830} $tone="type">Copy to Points</NodeText>
    <NodeText $x={2070} $y={850.5} $tone="name">CopySmallCrystals</NodeText>
    <NodeText $x={2606} $y={830} $tone="type">Copy to Points</NodeText>
    <NodeText $x={2605.5} $y={850.5} $tone="name">CopyLargeCrystals</NodeText>
    <NodeText $x={2355.5} $y={1046} $tone="name">merge3</NodeText>
    <NodeText $x={2366} $y={1145} $tone="type">Group Create</NodeText>
    <NodeText $x={2365.5} $y={1166} $tone="name">Crystals</NodeText>
    <NodeText $x={2365.5} $y={1202.5} $tone="info">group1</NodeText>

    <WireLayer viewBox="0 0 2741 1319">
      <Port x={1995.5} y={58} /><Port x={1995.5} y={106.7} />
      <NodeBody x={1942.5} y={65.5}>
        <circle r="14" fill="#1f2b33" />
        <path d="M-4-12H3L5-7 0-4-5-7ZM-12-6-8-7-5-2-8 2-12 0ZM12-6 8-7 5-2 8 2 12 0ZM-4-1 0-3 4-1 4 4 0 6-4 4ZM-11 4-7 5-5 9-8 11ZM11 4 7 5 5 9 8 11ZM-3 9H3V13H-3Z" fill="#cfd5d8" />
        <circle cy="1" r="4" fill="#27343c" />
      </NodeBody>
      <Port x={2071} y={205.7} /><Port x={2092} y={207.7} /><Port x={2113} y={210.7} /><Port x={2133.3} y={212.7} /><Port x={2101.7} y={259.7} />
      <NodeBody x={2051} y={216} shape="wave">
        <path d="M-9-10-1-13 4-9 10-9 13-2 7 4 11 9 6 13 0 8-12 7-9-1Z" fill="#b59c1c" />
        <path d="M-7-8H2L5-3-2 3-9 4Z" fill="#dccb3c" />
        <path d="M-1 3 8-4 10 2 3 7Z" fill="#1f1d10" />
        <path d="M3 6 12 2 13 10 6 14Z" fill="#e9e8d3" />
      </NodeBody>
      <Lock x={2168} y={247.5} />
      <Port x={2086} y={306.7} /><Port x={2086} y={354.7} />
      <NodeBody x={2033.3} y={313.5}>
        <path d="M-12-7Q-6-14-1-8 4-1 12-8M-12 7Q-6 0-1 6 4 13 12 6" fill="none" stroke="#b98682" strokeWidth="1.8" />
        <path d="M-12-9V-4M12-10V-5M-12 5V10M12 4V9M-2-9V-4M-2 5V9" stroke="#c99590" strokeWidth="2.4" />
      </NodeBody>

      <NodeBody x={1773.5} y={401} shape="input" fill="#488fdf"><MergeGlyph /></NodeBody>
      <Port x={1826.6} y={441.7} /><Port x={1826.4} y={509} /><Port x={1826.4} y={557.3} />
      <NodeBody x={1773.3} y={516.5}><TransformGlyph /></NodeBody>
      <NodeBody x={2309.8} y={401} shape="input" fill="#488fdf"><MergeGlyph /></NodeBody>
      <Port x={2362.8} y={441.7} /><Port x={2362.6} y={509} /><Port x={2362.6} y={557.3} />
      <NodeBody x={2309.5} y={516.5}><TransformGlyph /></NodeBody>

      <Port x={2117.7} y={409.7} /><Port x={2159.3} y={409.7} />
      <rect x="2084.2" y="414.2" width="109" height="39" rx="7" fill="#151515" stroke="#ffd60a" strokeWidth="5.4" />
      <path d="M2092 420H2176L2173 448H2092Q2088 448 2088 444V424Q2088 420 2092 420Z" fill="#cdcdcd" />
      <path d="M2178.5 420H2189V444Q2189 448 2185 448H2175.5Q2179 434 2178.5 420Z" fill="#00adf5" />
      <path d="M2102 422C2099 431 2101 438 2098 447M2117 422C2114 431 2116 438 2113 447M2165 422C2162 431 2164 438 2161 447" fill="none" stroke="#5c5c5c" strokeWidth="1.8" />
      <g transform="translate(2139.5 433)">
        <path d="M-12-5-7-9V-7H-1V-3H-7V-1ZM12-5 7-9V-7H1V-3H7V-1Z" fill="#b0372f" />
        <path d="M-4 1H4V6H-4Z" fill="#e0a29d" />
        <path d="M-12 6-6 3M12 6 6 3" stroke="#5a5a5a" strokeWidth="2.4" />
      </g>
      <Port x={2138.7} y={458} /><Port x={2138.7} y={512.3} />
      <NodeBody x={2086} y={519.3}>
        <path d="M0-13 13-1 0 13-13-1Z" fill="#d9c839" stroke="#897f2a" />
        <path d="M-3-9 3-6 0-3 4-3 9 1 3 4 0 3V8L-4 5Z" fill="#27251b" />
        <path d="M-1 0 4 0" stroke="#d9c839" strokeWidth="1.4" />
      </NodeBody>
      <Port x={2117.7} y={560.3} light /><Port x={2159.3} y={560.3} light />
      <Lock x={2206} y={550} />

      <Port x={1987.5} y={828} /><Port x={2029.4} y={828} /><Port x={2008.5} y={876.7} />
      <NodeBody x={1955.8} y={835.5} fill="#ffa71b"><CopyGlyph /></NodeBody>
      <Port x={2524} y={828} /><Port x={2565.6} y={828} /><Port x={2544.7} y={876.7} />
      <NodeBody x={2491.8} y={835.5} fill="#ffa71b"><CopyGlyph /></NodeBody>

      <path d="M2256 1018Q2295 1008 2334 1018 2341 1023 2336 1031 2295 1022 2254 1031 2249 1023 2256 1018Z" fill="#b0b0b0" />
      <NodeBody x={2241.5} y={1030} shape="merge">
        <path d="M-12-12-4-9-2-3-8 2ZM4-3 12 0 9 7 2 6ZM-11 12-8 5-2 8Z" fill="#dfe1ea" stroke="#9ea0ad" />
        <path d="M-4-12 5-8 2-3-3-5ZM-1 5 5 9-3 13-5 9Z" fill="#93363a" />
        <path d="M-6-2 4-2 3 4-5 4Z" fill="#aeaebb" />
      </NodeBody>
      <Port x={2294.9} y={1076.3} />
      <Port x={2283.9} y={1143.3} /><Port x={2325.3} y={1143.3} /><Port x={2304.9} y={1192} />
      <NodeBody x={2251.3} y={1150.8}>
        <circle r="12.5" fill="#f1e4cf" stroke="#d7a55c" strokeWidth="2.2" />
      </NodeBody>
    </WireLayer>
  </>
);

export default function App() {
  return (
    <>
      <GlobalStyle />
      <Screen>
        <Viewport>
          <Scene />
          <PointNumbers />
          <CameraBar>
            <CameraButton $w={129}>Persp<Caret /></CameraButton>
            <CameraButton $w={153}>No cam<Caret /></CameraButton>
          </CameraBar>
          <HelpPanel>
            <HelpLine>Left mouse tumbles. Middle pans. Right dollies. Ctrl+Alt+Left box-zooms. Ctrl+Right zooms. Spacebar-</HelpLine>
            <HelpLine>{"Ctrl-Left tilts. Hold L for alternate tumble, dolly, and zoom.    M or Alt+M for First Person Navigation."}</HelpLine>
          </HelpPanel>
          <AxisGnomon viewBox="0 0 50 70">
            <path d="M32 8V42" stroke="#7fe084" strokeWidth="2.4" />
            <path d="M26 44 36 54M36 42 27 54" stroke="#e88a80" strokeWidth="2.4" />
          </AxisGnomon>
          <AxisLetter>Z</AxisLetter>
        </Viewport>
        <DisplayToolbar />
        <Splitter>
          <svg width="9" height="13" viewBox="0 0 9 13"><path d="M8 0V13L0 6.5Z" fill="#8a8a8a" /></svg>
          <Grip>
            {Array.from({ length: 16 }, (_, i) => <GripDot key={i} />)}
          </Grip>
          <svg width="9" height="13" viewBox="0 0 9 13"><path d="M1 0V13L9 6.5Z" fill="#8a8a8a" /></svg>
        </Splitter>
        <Network>
          <Canvas>
            <ContextTitle>Geometry</ContextTitle>
            <NodeGraph />
          </Canvas>
        </Network>
      </Screen>
    </>
  );
}
